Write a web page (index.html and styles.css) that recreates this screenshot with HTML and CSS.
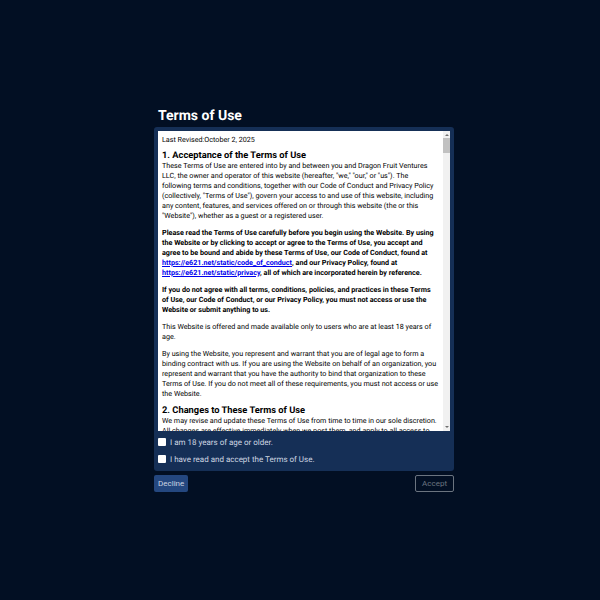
FILE: index.html
```html
<!DOCTYPE html>
<html lang="en">

<head>
    <title>Terms of Use</title>
    <meta charset="UTF-8">
    <link rel="stylesheet" href="styles.css">
</head>

<body>
    <div class="dialog">
        <h2 class="dialog-title">Terms of Use</h2>
        <div class="panel">
            <div class="terms-box">
                <div class="terms-text">
                    <p class="revised">Last Revised:October 2, 2025</p>
                    <h3>1. Acceptance of the Terms of Use</h3>
                    <p>These Terms of Use are entered into by and between you and Dragon Fruit Ventures LLC, the owner and operator of this website (hereafter, "we," "our," or "us"). The following terms and conditions, together with our Code of Conduct and Privacy Policy (collectively, "Terms of Use"), govern your access to and use of this website, including any content, features, and services offered on or through this website (the or this "Website"), whether as a guest or a registered user.</p>
                    <p class="strong">Please read the Terms of Use carefully before you begin using the Website. By using the Website or by clicking to accept or agree to the Terms of Use, you accept and agree to be bound and abide by these Terms of Use, our Code of Conduct, found at <a href="#">https://e621.net/static/code_of_conduct</a>, and our Privacy Policy, found at <a href="#">https://e621.net/static/privacy</a>, all of which are incorporated herein by reference.</p>
                    <p class="strong">If you do not agree with all terms, conditions, policies, and practices in these Terms of Use, our Code of Conduct, or our Privacy Policy, you must not access or use the Website or submit anything to us.</p>
                    <p>This Website is offered and made available only to users who are at least 18 years of age.</p>
                    <p>By using the Website, you represent and warrant that you are of legal age to form a binding contract with us. If you are using the Website on behalf of an organization, you represent and warrant that you have the authority to bind that organization to these Terms of Use. If you do not meet all of these requirements, you must not access or use the Website.</p>
                    <h3>2. Changes to These Terms of Use</h3>
                    <p>We may revise and update these Terms of Use from time to time in our sole discretion. All changes are effective immediately when we post them, and apply to all access to and use of the Website thereafter.</p>
                </div>
                <div class="scrollbar">
                    <span class="arrow-up"></span>
                    <span class="thumb"></span>
                    <span class="arrow-down"></span>
                </div>
            </div>
            <div class="check-list">
                <label class="check-row"><input type="checkbox"> I am 18 years of age or older.</label>
                <label class="check-row"><input type="checkbox"> I have read and accept the Terms of Use.</label>
            </div>
        </div>
        <div class="button-row">
            <button class="decline-button">Decline</button>
            <button class="accept-button" disabled>Accept</button>
        </div>
    </div>
</body>

</html>
```

FILE: styles.css
```css
body {
    background-color: #020f23;
    font-family: Roboto, "Liberation Sans", sans-serif;
    text-rendering: geometricPrecision;
    margin: 0;
    height: 600px;
    padding-left: 8px;
    box-sizing: border-box;
    display: flex;
    align-items: center;
    justify-content: center;
}

.dialog {
    width: 300px;
    padding-bottom: 1px;
}

.dialog-title {
    color: #fff;
    font-size: 14px;
    font-weight: 700;
    line-height: 17px;
    margin: 0 0 2px 4px;
}

.panel {
    background-color: #152f56;
    border-radius: 3px;
    padding: 4px 4px 3px;
}

.terms-box {
    background-color: #fff;
    height: 300px;
    display: flex;
}

.scrollbar {
    width: 7px;
    background-color: #f1f1f1;
    display: flex;
    flex-direction: column;
    align-items: center;
}

.arrow-up {
    border-left: 2px solid transparent;
    border-right: 2px solid transparent;
    border-bottom: 2px solid #707070;
    margin: 3px 0 2px;
}

.thumb {
    width: 100%;
    height: 15px;
    background-color: #c1c1c1;
}

.arrow-down {
    border-left: 2px solid transparent;
    border-right: 2px solid transparent;
    border-top: 2px solid #707070;
    margin: auto 0 3px;
}

.terms-text {
    flex: 1;
    overflow: hidden;
    color: #000;
    font-size: 7.2px;
    line-height: 10px;
    padding: 4px 4px 0;
}

.terms-text p {
    margin: 0 0 7px;
}

.terms-text h3 {
    font-size: 9.3px;
    line-height: 10px;
    font-weight: 700;
    margin: 0;
}

.terms-text .revised {
    margin-bottom: 6px;
}

.terms-text .strong {
    font-weight: 700;
}

.terms-text a {
    color: #0000ee;
}

.check-list {
    padding-top: 3px;
}

.check-row {
    display: flex;
    align-items: center;
    gap: 4px;
    color: #cdd5e1;
    font-size: 8px;
    height: 17px;
}

.check-row input {
    appearance: none;
    background-color: #fff;
    border-radius: 1px;
    width: 8px;
    height: 8px;
    margin: 0;
}

.button-row {
    display: flex;
    justify-content: space-between;
    margin-top: 4px;
}

.decline-button {
    background-color: #24477f;
    color: #cdd5e1;
    font-family: inherit;
    font-size: 8px;
    padding: 0 4px;
    height: 17px;
    border: none;
    border-radius: 2px;
}

.accept-button {
    background-color: transparent;
    color: #6b7480;
    font-family: inherit;
    font-size: 8px;
    padding: 0 6px;
    height: 17px;
    border: 1px solid #6b7480;
    border-radius: 2px;
}
```
